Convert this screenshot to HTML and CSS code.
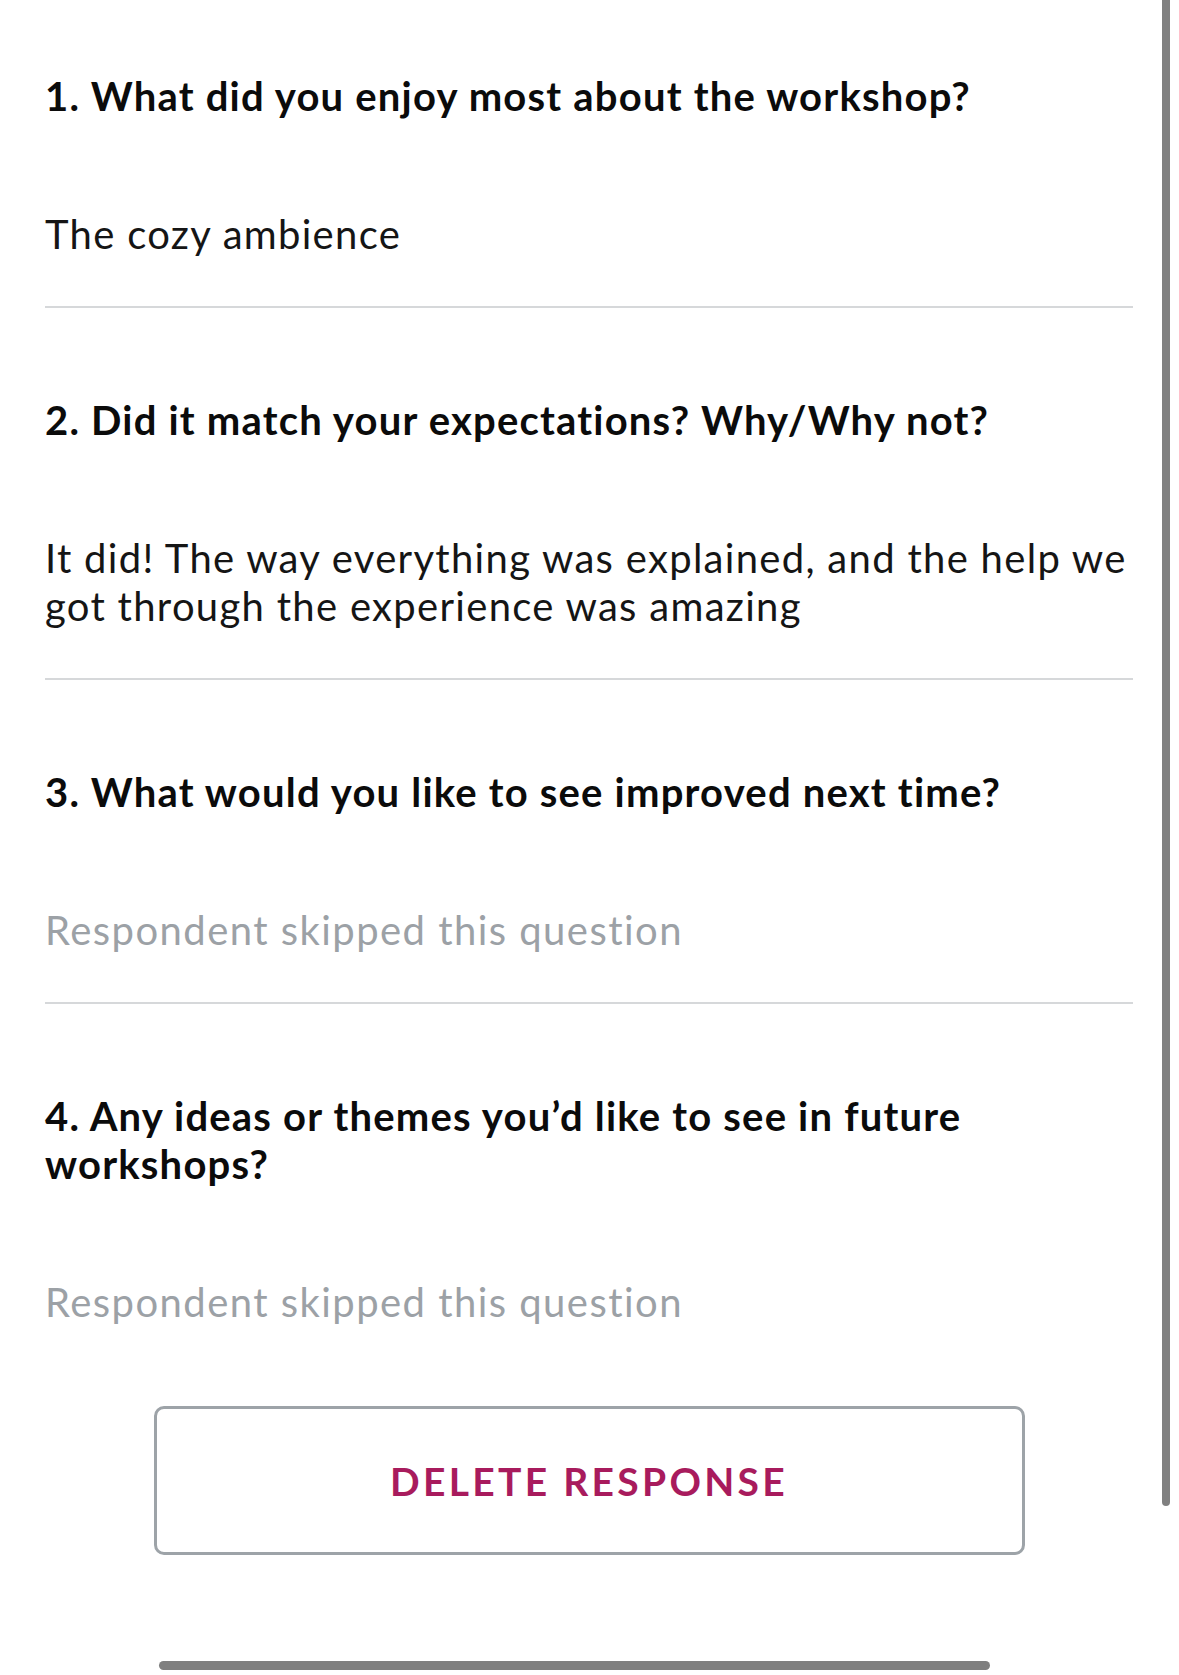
FILE: index.html
```html
<!DOCTYPE html>
<html lang="en">
<head>
<meta charset="utf-8">
<title>Response</title>
<link rel="stylesheet" href="styles.css">
</head>
<body>
<main class="page">
  <section class="item">
    <h2 class="question">1. What did you enjoy most about the workshop?</h2>
    <p class="answer">The cozy ambience</p>
  </section>
  <section class="item">
    <h2 class="question">2. Did it match your expectations? Why/Why not?</h2>
    <p class="answer">It did! The way everything was explained, and the help we got through the experience was amazing</p>
  </section>
  <section class="item">
    <h2 class="question">3. What would you like to see improved next time?</h2>
    <p class="answer skipped">Respondent skipped this question</p>
  </section>
  <section class="item last">
    <h2 class="question">4. Any ideas or themes you’d like to see in future workshops?</h2>
    <p class="answer skipped">Respondent skipped this question</p>
  </section>
  <div class="actions">
    <button class="delete" type="button">DELETE RESPONSE</button>
  </div>
</main>
<div class="scrollbar"></div>
<div class="home-indicator"></div>
</body>
</html>
```
FILE: styles.css
```css
html, body {
  margin: 0;
  padding: 0;
  background: #ffffff;
}
body {
  font-family: Lato, "Liberation Sans", sans-serif;
  color: #111111;
  width: 1179px;
  height: 1675px;
  position: relative;
  overflow: hidden;
}
.page {
  padding: 72px 46px 0 45px;
}
.item {
  padding: 0 0 48px 0;
  border-bottom: 2px solid #d6d8da;
  margin-bottom: 88px;
}
.item.last {
  border-bottom: none;
  margin-bottom: 0;
  padding-bottom: 80px;
}
.question {
  margin: 0;
  font-size: 40px;
  line-height: 48px;
  font-weight: 700;
  letter-spacing: 1.2px;
  color: #0b0b0b;
}
.answer {
  margin: 90px 0 0 0;
  font-size: 40px;
  line-height: 48px;
  font-weight: 400;
  letter-spacing: 1.3px;
  color: #151515;
}
.answer.skipped {
  color: #9ca1a6;
  letter-spacing: 1.45px;
}
.actions {
  display: flex;
  justify-content: center;
}
.delete {
  width: 871px;
  height: 149px;
  background: #ffffff;
  border: 3px solid #9da3a8;
  border-radius: 10px;
  font-family: Lato, "Liberation Sans", sans-serif;
  font-size: 39px;
  font-weight: 700;
  letter-spacing: 3.3px;
  color: #a81b5d;
  padding: 0;
}
.scrollbar {
  position: absolute;
  top: 0;
  left: 1162px;
  width: 8px;
  height: 1506px;
  background: #808080;
  border-radius: 0 0 4px 4px;
}
.home-indicator {
  position: absolute;
  top: 1661px;
  left: 159px;
  width: 831px;
  height: 9px;
  background: #7f7f7f;
  border-radius: 5px;
}
```
